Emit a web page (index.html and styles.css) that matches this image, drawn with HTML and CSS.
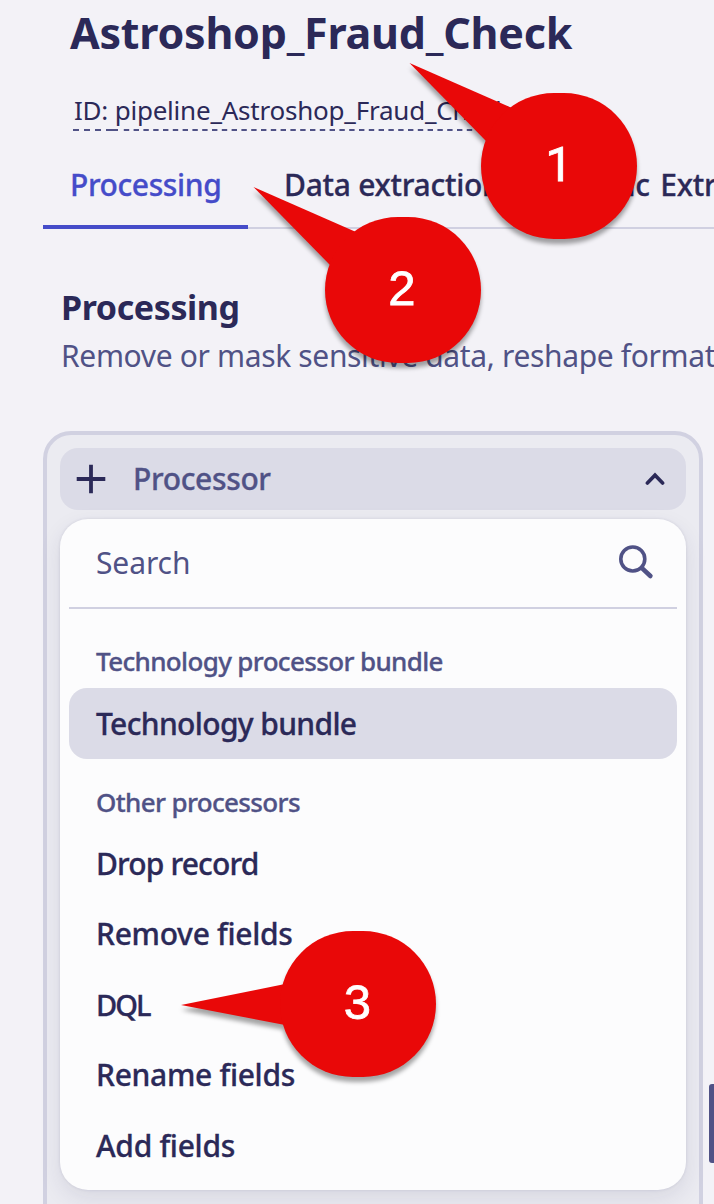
FILE: index.html
```
<!DOCTYPE html>
<html lang="en">
<head>
<meta charset="utf-8">
<title>Astroshop_Fraud_Check</title>
<link rel="stylesheet" href="styles.css">
</head>
<body>
<main class="page">
  <h1 class="title">Astroshop_Fraud_Check</h1>
  <div class="pipeline-id"><span class="id-text">ID: pipeline_Astroshop_Fraud_Check</span>
    <svg class="id-line" width="430" height="2"><path d="M0 1H6M11 1H17M22 1H28M33 1H45" stroke="#505286" stroke-width="2"/><path d="M50.8 1H430" stroke="#505286" stroke-width="2" stroke-dasharray="5.4 4.4"/></svg>
  </div>
  <nav class="tabs">
    <a class="tab active">Processing</a>
    <a class="tab">Data extraction</a>
    <a class="tab tab-metric">Metric Extraction</a>
  </nav>
  <section class="intro">
    <h2 class="heading">Processing</h2>
    <p class="desc">Remove or mask sensitive data, reshape formats</p>
  </section>
  <section class="panel">
    <button class="trigger">
      <svg width="30" height="30" viewBox="0 0 30 30"><path d="M15 .7V29.3M.7 15H29.3" stroke="#2b2958" stroke-width="3.8"/></svg>
      <span class="trigger-label">Processor</span>
      <svg width="20" height="14" viewBox="0 0 20 14"><path d="M2.4 11L10 3.2L17.6 11" fill="none" stroke="#2b2958" stroke-width="3.6" stroke-linecap="round"/></svg>
    </button>
    <div class="menu">
      <div class="search">
        <span class="search-text">Search</span>
        <svg width="36" height="36" viewBox="0 0 36 36" fill="none" stroke="#505286"><circle cx="14.8" cy="15" r="12" stroke-width="3.6"/><path d="M23.7 23.9L32.4 32" stroke-width="4.6" stroke-linecap="round"/></svg>
      </div>
      <div class="group">Technology processor bundle</div>
      <div class="item selected">Technology bundle</div>
      <div class="group group-other">Other processors</div>
      <div class="item item-drop">Drop record</div>
      <div class="item">Remove fields</div>
      <div class="item item-dql">DQL</div>
      <div class="item">Rename fields</div>
      <div class="item">Add fields</div>
    </div>
  </section>
  <div class="scrollbar"></div>
  <svg class="callouts" width="714" height="1204" viewBox="0 0 714 1204">
    <g class="bubble"><path d="M409.5 63L512 108L530 150L486 141Z"/><rect x="481" y="93" width="156" height="146" rx="73"/></g>
    <g class="bubble"><path d="M253.5 187L356 232L374 274L330 265Z"/><rect x="325" y="217" width="156" height="146" rx="73"/></g>
    <g class="bubble"><path d="M181 1005L285 984V1025Z"/><rect x="280" y="931" width="156" height="146" rx="73"/></g>
    <g class="number"><text class="one" x="559" y="181">1</text><text x="402" y="305">2</text><text x="357.5" y="1019">3</text></g>
  </svg>
</main>
</body>
</html>
```
FILE: styles.css
```
* { box-sizing: border-box; }
body { margin: 0; background: #f3f2f7; }
.page {
  position: relative;
  width: 714px;
  height: 1204px;
  overflow: hidden;
  font: 500 30px/40px "Noto Sans", "Open Sans", sans-serif;
  color: #2b2958;
  white-space: nowrap;
}
.title { margin: 3px 0 0 70px; font-size: 43px; line-height: 60px; font-weight: 700; letter-spacing: -.24px; }
.pipeline-id { margin: 28px 0 0 73px; height: 40px; width: 430px; display: flex; flex-direction: column; }
.id-text { font-size: 26px; line-height: 38px; font-weight: 400; letter-spacing: -.22px; padding-left: 1px; }
.id-line { display: block; flex: none; }
.tabs { display: flex; gap: 9px; margin: 20px 0 0 43px; width: 900px; height: 78px; border-bottom: 2px solid #d0d0e1; }
.tab { height: 78px; padding: 13px 27px 0; line-height: 42px; letter-spacing: -.27px; }
.tab.active { width: 205px; color: #454cc9; border-bottom: 4px solid #454cc9; letter-spacing: -.4px; }
.tab-metric { margin-left: -4px; word-spacing: 3px; }
.tab, .trigger-label, .group, .item { -webkit-text-stroke: .3px currentColor; }
.intro { padding: 53px 0 0 61px; }
.heading { margin: 0; font-size: 34px; line-height: 50px; font-weight: 700; letter-spacing: -.4px; }
.desc { margin: 2px 0 0; font-weight: 400; line-height: 44px; color: #505286; letter-spacing: -.35px; }
.panel { margin: 53px 0 0 43px; width: 660px; height: 800px; padding: 13px; border: 4px solid #d1d1e1; border-radius: 28px; background: #ebebf1; }
.trigger { display: flex; align-items: center; width: 626px; height: 62px; padding: 0 21px 0 16px; border: 0; border-radius: 18px; background: #dbdbe7; color: #505286; font: inherit; }
.trigger-label { flex: 1; padding-left: 27px; text-align: left; letter-spacing: -.35px; }
.menu { width: 626px; height: 671px; margin-top: 9px; padding: 0 9px; border-radius: 28px; background: #fcfcfd; box-shadow: 0 0 3px rgba(43,41,88,.12), 0 8px 22px rgba(43,41,88,.1); }
.search { display: flex; align-items: center; justify-content: space-between; height: 90px; padding: 0 23px 2px 27px; border-bottom: 2px solid #d0d0e1; color: #505286; font-weight: 400; letter-spacing: -.1px; }
.search-text { padding-top: 1px; }
.group { margin-top: 32px; padding-left: 27px; height: 47px; font-size: 26px; line-height: 40px; color: #505286; letter-spacing: -.65px; }
.group-other { margin-top: 23px; }
.item { height: 70.4px; padding-left: 27px; line-height: 69px; letter-spacing: -.3px; }
.item-drop { letter-spacing: -.85px; }
.item-dql { font-size: 29px; letter-spacing: -2px; }
.selected { height: 71px; line-height: 71px; border-radius: 18px; background: #dbdbe7; letter-spacing: -.65px; }
.scrollbar { position: absolute; left: 709px; top: 1084px; width: 10px; height: 79px; border-radius: 3px; background: #505286; }
.callouts { position: absolute; left: 0; top: 0; }
.bubble { fill: #e90808; filter: drop-shadow(0 5px 2px rgba(0,0,0,.35)); }
.number { fill: #fff; font: 49px "Liberation Sans", Arial, sans-serif; text-anchor: middle; stroke: #fff; stroke-width: .8px; }
.number .one { font-family: Roboto, sans-serif; }
```
